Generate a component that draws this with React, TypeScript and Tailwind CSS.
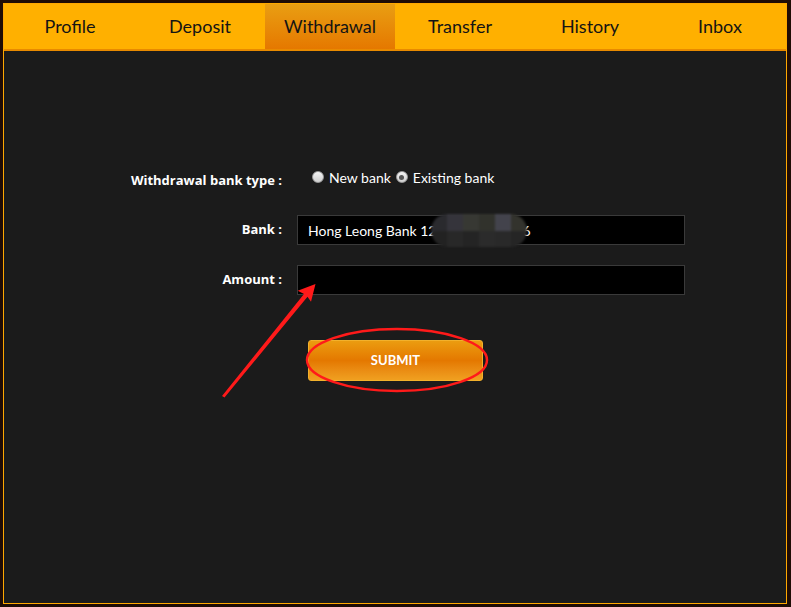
import { useState } from "react";

const tabs = ["Profile", "Deposit", "Withdrawal", "Transfer", "History", "Inbox"];

function Radio({ checked }: { checked: boolean }) {
  return (
    <span className="relative inline-flex items-center justify-center w-[12px] h-[12px] rounded-full border border-[#9a9a9a] bg-gradient-to-b from-[#f4f4f4] to-[#cfcfcf]">
      {checked && <span className="w-[5px] h-[5px] rounded-full bg-[#555]" />}
    </span>
  );
}

export default function App() {
  const [active] = useState("Withdrawal");
  const [bankType, setBankType] = useState("existing");

  const labelClass = "w-[278px] text-right text-white font-bold text-[13px] font-['Open_Sans',sans-serif]";
  const inputClass = "ml-[15px] w-[388px] h-[30px] bg-black border border-[#3a3a3a] text-white text-[14px] px-[10px] flex items-center";

  return (
    <div className="w-[791px] h-[607px] bg-[#1f0c05] pt-[3px] pl-[3px] pr-[4px] relative" style={{ fontFamily: "Lato, 'Open Sans', sans-serif" }}>
      <div className="h-[601px] border border-[#ffa800] flex flex-col bg-[#1b1b1b]">
        <div className="h-[47px] bg-[#ffb000] border-b-2 border-[#e88a00] flex pl-px">
          {tabs.map((t) => (
            <div
              key={t}
              className={
                "w-[130px] flex items-center justify-center text-[18px] text-[#141414] " +
                (t === active ? "bg-gradient-to-b from-[#e99e12] to-[#e57800]" : "")
              }
            >
              {t}
            </div>
          ))}
        </div>

        <div className="flex flex-col pt-[118px]">
          <div className="flex items-center h-[20px]">
            <div className={labelClass + " pt-[4px]"}>Withdrawal bank type :</div>
            <div className="ml-[30px] flex items-center gap-[4px] text-white text-[14px] -mt-[4px]">
              <span className="flex items-center gap-[5px] cursor-pointer" onClick={() => setBankType("new")}>
                <Radio checked={bankType === "new"} />
                <span>New bank</span>
              </span>
              <span className="ml-[1px] flex items-center gap-[5px] cursor-pointer" onClick={() => setBankType("existing")}>
                <Radio checked={bankType === "existing"} />
                <span>Existing bank</span>
              </span>
            </div>
          </div>

          <div className="flex items-center mt-[26px]">
            <div className={labelClass}>Bank :</div>
            <div className={inputClass + " relative"}>
              <span>Hong Leong Bank 12</span>
              <span className="inline-block w-[86px]" />
              <span>6</span>
              <div className="absolute left-[133px] top-[-2px] w-[96px] h-[33px] rounded-full overflow-hidden grid grid-cols-6 grid-rows-2 blur-[1px]">
                <div className="bg-[#2a2a2e]" />
                <div className="bg-[#35343b]" />
                <div className="bg-[#373833]" />
                <div className="bg-[#31322c]" />
                <div className="bg-[#43434c]" />
                <div className="bg-[#33332d]" />
                <div className="bg-[#222222]" />
                <div className="bg-[#282828]" />
                <div className="bg-[#242424]" />
                <div className="bg-[#2b2b2b]" />
                <div className="bg-[#292929]" />
                <div className="bg-[#252525]" />
              </div>
            </div>
          </div>

          <div className="flex items-center mt-[20px]">
            <div className={labelClass}>Amount :</div>
            <div className={inputClass} />
          </div>

          <div className="flex mt-[45px]">
            <button className="ml-[304px] w-[175px] h-[41px] rounded-[3px] border border-[#f2b12c] bg-gradient-to-b from-[#eb9c10] via-[#e47800] to-[#f0a020] text-white font-bold text-[13px]">
              SUBMIT
            </button>
          </div>
        </div>
      </div>

      <svg className="absolute inset-0 pointer-events-none" width="791" height="607">
        <ellipse cx="397" cy="360" rx="90" ry="31" fill="none" stroke="#ff1a1a" strokeWidth="2.5" />
        <polygon points="222,396 304,294 297.7,290.7 315.5,284 311,301.7 307.5,296.8 224.5,397.5" fill="#ff1a1a" />
      </svg>
    </div>
  );
}
